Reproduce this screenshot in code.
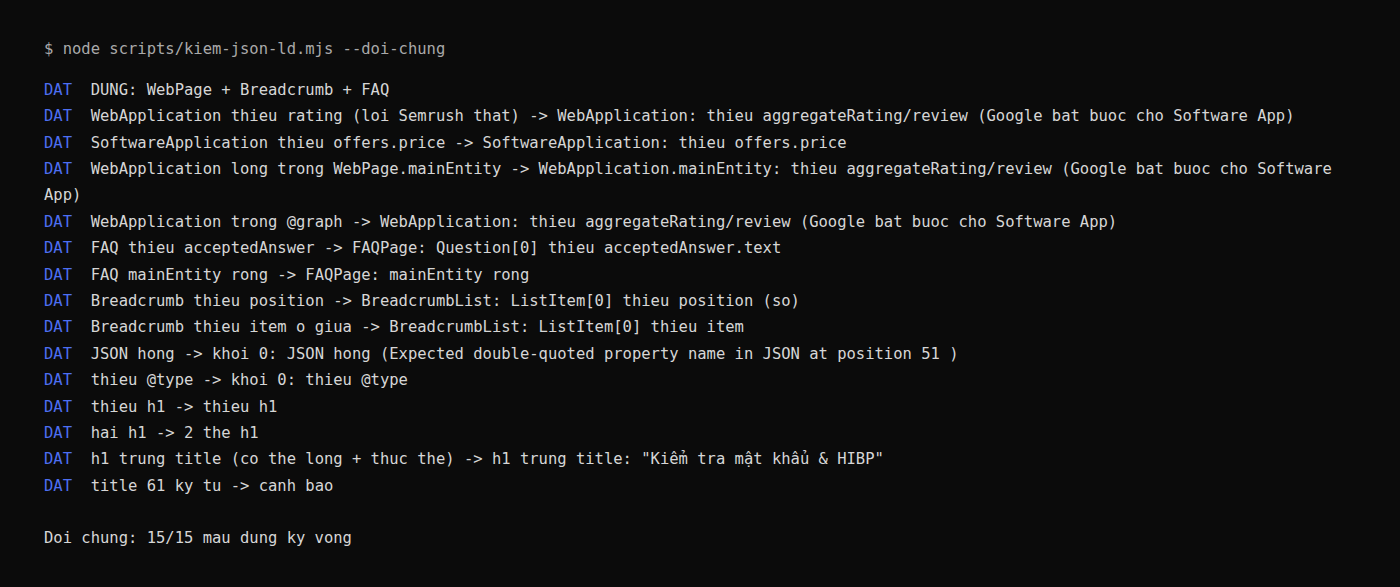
export default function App() {
  const lines = [
    "DUNG: WebPage + Breadcrumb + FAQ",
    "WebApplication thieu rating (loi Semrush that) -> WebApplication: thieu aggregateRating/review (Google bat buoc cho Software App)",
    "SoftwareApplication thieu offers.price -> SoftwareApplication: thieu offers.price",
    "WebApplication long trong WebPage.mainEntity -> WebApplication.mainEntity: thieu aggregateRating/review (Google bat buoc cho Software App)",
    "WebApplication trong @graph -> WebApplication: thieu aggregateRating/review (Google bat buoc cho Software App)",
    "FAQ thieu acceptedAnswer -> FAQPage: Question[0] thieu acceptedAnswer.text",
    "FAQ mainEntity rong -> FAQPage: mainEntity rong",
    "Breadcrumb thieu position -> BreadcrumbList: ListItem[0] thieu position (so)",
    "Breadcrumb thieu item o giua -> BreadcrumbList: ListItem[0] thieu item",
    "JSON hong -> khoi 0: JSON hong (Expected double-quoted property name in JSON at position 51 )",
    "thieu @type -> khoi 0: thieu @type",
    "thieu h1 -> thieu h1",
    "hai h1 -> 2 the h1",
    'h1 trung title (co the long + thuc the) -> h1 trung title: "Kiểm tra mật khẩu & HIBP"',
    "title 61 ky tu -> canh bao",
  ];
  return (
    <div className="min-h-[587px] w-[1400px] bg-[#0b0b0b] px-[44px] pt-[36px] font-['DejaVu_Sans_Mono','Liberation_Mono',monospace] text-[15.5px] leading-[26.4px] text-[#d6d6d6]">
      <div className="w-[1312px] whitespace-pre-wrap">
        <div className="text-[#a9a9a9]">$ node scripts/kiem-json-ld.mjs --doi-chung</div>
        <div className="mt-[14.4px]">
          {lines.map((l, i) => (
            <div key={i}>
              <span className="text-[#4d6ff2]">DAT</span>
              {"  " + l}
            </div>
          ))}
        </div>
        <div className="mt-[25.6px]">Doi chung: 15/15 mau dung ky vong</div>
      </div>
    </div>
  );
}
